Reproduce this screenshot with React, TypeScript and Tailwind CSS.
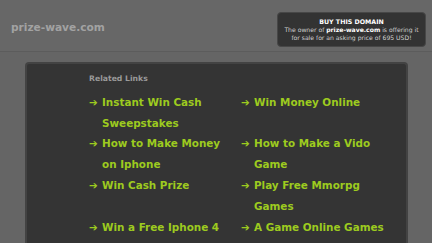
import React from 'react';

const leftLinks = [
    'Instant Win Cash Sweepstakes',
    'How to Make Money on Iphone',
    'Win Cash Prize',
    'Win a Free Iphone 4',
];

const rightLinks = [
    'Win Money Online',
    'How to Make a Vido Game',
    'Play Free Mmorpg Games',
    'A Game Online Games',
];

const LinkItem: React.FC<{ label: string }> = ({ label }) => (
    <a href="#" className="flex items-start text-[#9dcb1f] leading-[20.9px] text-[10.4px] font-bold">
        <span className="w-[13px] shrink-0">➔</span>
        <span className="w-[133px]">{label}</span>
    </a>
);

export default function App() {
    // rows pair up left/right so the grid keeps both columns aligned
    const rows = leftLinks.map((l, i) => [l, rightLinks[i]]);

    return (
        <div className="w-[432px] h-[243px] overflow-hidden bg-[#656565] font-['DejaVu_Sans',sans-serif]">
            <header className="h-[52px] bg-[#676767] border-b border-[#5c5c5c] flex items-start justify-between pl-[11px] pr-[6px]">
                <div className="mt-[20px] text-[10.6px] font-bold leading-[14px] text-[#a2a2a2]">prize-wave.com</div>
                <div className="mt-[12px] w-[149px] h-[35px] rounded-[4px] bg-[#333333] border border-[#474747] text-center pt-[5px]">
                    <div className="text-[6.3px] font-bold leading-[8px] text-white">BUY THIS DOMAIN</div>
                    <div className="text-[6.1px] leading-[8px] text-[#d0d0d0]">
                        The owner of <span className="font-bold text-white">prize-wave.com</span> is offering it
                        <br />
                        for sale for an asking price of 695 USD!
                    </div>
                </div>
            </header>

            <div className="mt-[10px] ml-[25px] w-[383px] h-[200px] rounded-t-[4px] bg-[#343434] border-2 border-b-0 border-[#434343] pl-[62px] pt-[11px]">
                <div className="text-[7.7px] font-bold leading-[8px] text-[#9a9a9a]">Related Links</div>
                <div className="mt-[8.6px] grid grid-cols-[152px_152px]">
                    {rows.map(([l, r]) => (
                        <React.Fragment key={l}>
                            <LinkItem label={l} />
                            <LinkItem label={r} />
                        </React.Fragment>
                    ))}
                </div>
            </div>
        </div>
    );
}
